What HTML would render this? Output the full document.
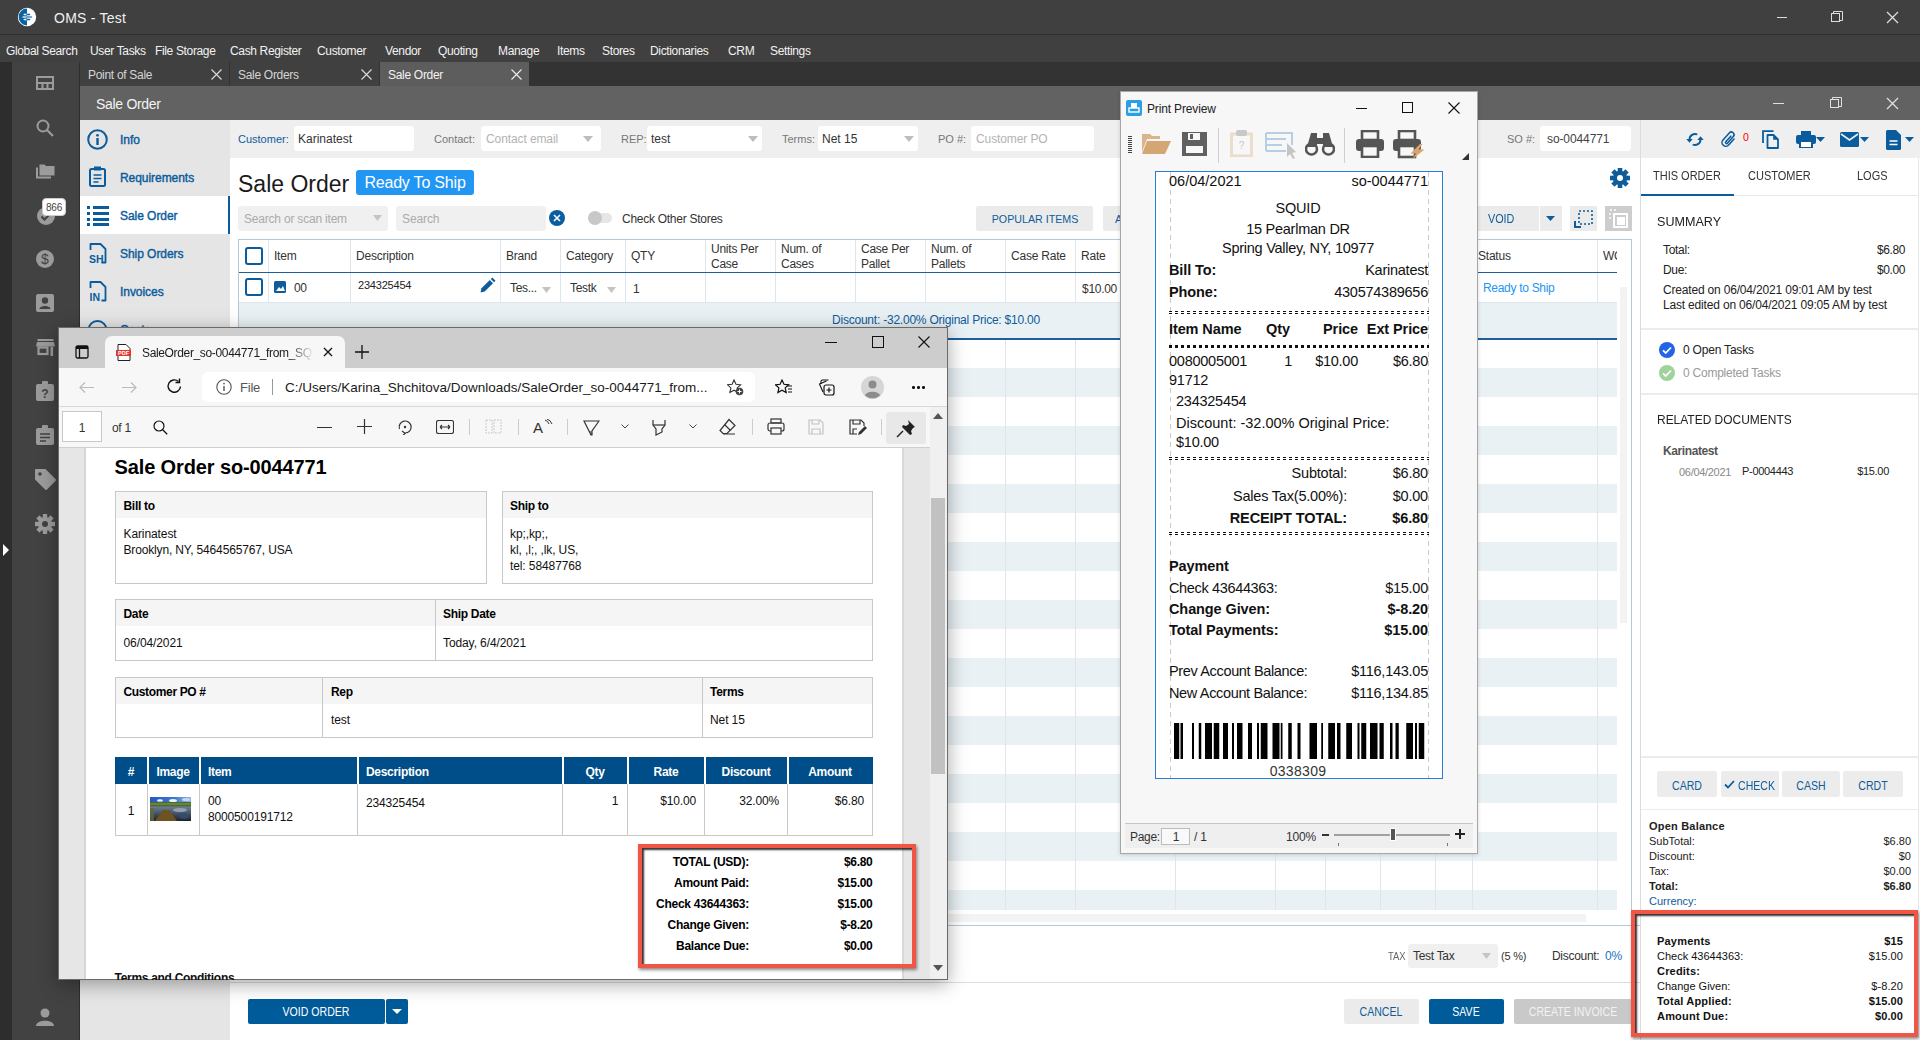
<!DOCTYPE html><html><head><meta charset="utf-8"><style>*{margin:0;padding:0}
html,body{width:1920px;height:1040px;overflow:hidden;background:#fff;position:relative;font-family:"Liberation Sans",sans-serif}
.t{position:absolute;white-space:nowrap;line-height:1}
.r{position:absolute}
</style></head><body><div class="r" style="left:0px;top:0px;width:1920px;height:34px;background:#404040;"></div><div class="r" style="left:0px;top:34px;width:1920px;height:1px;background:#2f2f2f;"></div><div class="r" style="left:0px;top:35px;width:1920px;height:27px;background:#404040;"></div><svg class="r" style="left:17px;top:7px;" width="20" height="20" viewBox="0 0 20 20"><circle cx="10" cy="10" r="9.2" fill="#fff"/><path d="M10 1.6A8.4 8.4 0 0 0 10 18.4Z" fill="#0a62a3"/><path d="M7.2 7.5H10M7.2 12.5H10" stroke="#fff" stroke-width="1.3" stroke-linecap="round"/><path d="M10 7.5h2.6M10 12.5h2.6" stroke="#0a62a3" stroke-width="1.3" stroke-linecap="round"/><path d="M6.2 10H10" stroke="#d4e3ef" stroke-width="1.7" stroke-linecap="round"/><path d="M10 10h4.4" stroke="#4b8abd" stroke-width="1.7" stroke-linecap="round"/></svg><div class="t" style="top:11.15px;font-size:14px;color:#f0f0f0;letter-spacing:0.25px;left:54px;">OMS - Test</div><div class="r" style="left:1777px;top:17px;width:10px;height:1px;background:#ddd;"></div><svg class="r" style="left:1831px;top:11px;" width="12" height="12" viewBox="0 0 12 12"><rect x="0.5" y="2.5" width="8" height="8" fill="none" stroke="#ddd"/><path d="M2.5 2.5V0.5h9v9h-3" fill="none" stroke="#ddd"/></svg><svg class="r" style="left:1886px;top:11px;" width="13" height="13" viewBox="0 0 13 13"><path d="M1 1L12 12M12 1L1 12" stroke="#ddd" stroke-width="1.3"/></svg><div class="t" style="top:44.84px;font-size:12px;color:#f2f2f2;letter-spacing:-0.35px;left:6px;">Global Search</div><div class="t" style="top:44.84px;font-size:12px;color:#f2f2f2;letter-spacing:-0.35px;left:90px;">User Tasks</div><div class="t" style="top:44.84px;font-size:12px;color:#f2f2f2;letter-spacing:-0.35px;left:155px;">File Storage</div><div class="t" style="top:44.84px;font-size:12px;color:#f2f2f2;letter-spacing:-0.35px;left:230px;">Cash Register</div><div class="t" style="top:44.84px;font-size:12px;color:#f2f2f2;letter-spacing:-0.35px;left:317px;">Customer</div><div class="t" style="top:44.84px;font-size:12px;color:#f2f2f2;letter-spacing:-0.35px;left:385px;">Vendor</div><div class="t" style="top:44.84px;font-size:12px;color:#f2f2f2;letter-spacing:-0.35px;left:438px;">Quoting</div><div class="t" style="top:44.84px;font-size:12px;color:#f2f2f2;letter-spacing:-0.35px;left:498px;">Manage</div><div class="t" style="top:44.84px;font-size:12px;color:#f2f2f2;letter-spacing:-0.35px;left:557px;">Items</div><div class="t" style="top:44.84px;font-size:12px;color:#f2f2f2;letter-spacing:-0.35px;left:602px;">Stores</div><div class="t" style="top:44.84px;font-size:12px;color:#f2f2f2;letter-spacing:-0.35px;left:650px;">Dictionaries</div><div class="t" style="top:44.84px;font-size:12px;color:#f2f2f2;letter-spacing:-0.35px;left:728px;">CRM</div><div class="t" style="top:44.84px;font-size:12px;color:#f2f2f2;letter-spacing:-0.35px;left:770px;">Settings</div><div class="r" style="left:0px;top:62px;width:12px;height:978px;background:#2d2d2d;"></div><div class="r" style="left:12px;top:62px;width:67px;height:978px;background:#424242;"></div><div class="r" style="left:79px;top:62px;width:1px;height:978px;background:#2e2e2e;"></div><svg class="r" style="left:36px;top:76px;" width="18" height="14" viewBox="0 0 18 14"><rect x="1" y="1" width="16" height="12" fill="none" stroke="#9b9b9b" stroke-width="2"/><path d="M1 7h16M6.5 7v6M11.5 7v6" stroke="#9b9b9b" stroke-width="2"/></svg><svg class="r" style="left:36px;top:119px;" width="18" height="18" viewBox="0 0 18 18"><circle cx="7" cy="7" r="5.5" fill="none" stroke="#9b9b9b" stroke-width="2"/><path d="M11 11l6 6" stroke="#9b9b9b" stroke-width="2.2"/></svg><svg class="r" style="left:36px;top:164px;" width="19" height="15" viewBox="0 0 19 15"><path d="M3.5 0.5h5l1.5 1.5h8.5v9.5h-15z" fill="#9b9b9b"/><path d="M1 3.5v10h14" fill="none" stroke="#9b9b9b" stroke-width="2"/></svg><svg class="r" style="left:37px;top:207px;" width="18" height="18" viewBox="0 0 18 18"><circle cx="9" cy="9" r="9" fill="#9b9b9b"/><path d="M4.5 9.5l3 3 6-6" fill="none" stroke="#424242" stroke-width="2"/></svg><div class="r" style="left:42px;top:198px;width:24px;height:18px;background:#fff;border-radius:4px;border:1px solid #ccc;box-sizing:border-box;"></div><div class="t" style="top:202.53px;font-size:10px;color:#444;letter-spacing:-0.20px;left:54px;transform:translateX(-50%);">866</div><svg class="r" style="left:36px;top:250px;" width="18" height="18" viewBox="0 0 18 18"><circle cx="9" cy="9" r="9" fill="#9b9b9b"/><text x="9" y="14" font-family="Liberation Sans" font-size="14" text-anchor="middle" fill="#424242">$</text></svg><svg class="r" style="left:36px;top:294px;" width="18" height="18" viewBox="0 0 18 18"><rect x="0" y="0" width="18" height="18" rx="2" fill="#9b9b9b"/><circle cx="9" cy="6.5" r="3.2" fill="#424242"/><path d="M3.5 15c0-4 11-4 11 0z" fill="#424242"/></svg><svg class="r" style="left:36px;top:339px;" width="19" height="17" viewBox="0 0 19 17"><rect x="1.5" y="0" width="16" height="2" fill="#9b9b9b"/><path d="M1 3h17l1 4.5H0z" fill="#9b9b9b"/><rect x="2.5" y="8.5" width="9" height="6.5" fill="none" stroke="#9b9b9b" stroke-width="2.2"/><rect x="14.5" y="8" width="2.6" height="9" fill="#9b9b9b"/></svg><svg class="r" style="left:36px;top:381px;" width="18" height="20" viewBox="0 0 18 20"><rect x="0" y="3" width="18" height="17" rx="2" fill="#9b9b9b"/><rect x="6" y="0" width="6" height="5" rx="1" fill="#9b9b9b"/><text x="9" y="17" font-family="Liberation Sans" font-weight="bold" font-size="12" text-anchor="middle" fill="#424242">?</text></svg><svg class="r" style="left:36px;top:425px;" width="18" height="20" viewBox="0 0 18 20"><rect x="0" y="3" width="18" height="17" rx="2" fill="#9b9b9b"/><rect x="6" y="0" width="6" height="5" rx="1" fill="#9b9b9b"/><path d="M4 9h10M4 12.5h10M4 16h6" stroke="#424242" stroke-width="1.6"/></svg><svg class="r" style="left:35px;top:469px;" width="21" height="21" viewBox="0 0 21 21"><path d="M1 1h9l10 10-9 9L1 10z" fill="#9b9b9b" stroke="#9b9b9b" stroke-linejoin="round" stroke-width="2"/><circle cx="5" cy="5" r="1.8" fill="#424242"/></svg><svg class="r" style="left:35px;top:514px;" width="20" height="20" viewBox="0 0 20 20"><g fill="#9b9b9b" transform="translate(10 10)"><circle r="7"/><rect x="-2.2" y="-10" width="4.4" height="5" transform="rotate(0)"/><rect x="-2.2" y="-10" width="4.4" height="5" transform="rotate(45)"/><rect x="-2.2" y="-10" width="4.4" height="5" transform="rotate(90)"/><rect x="-2.2" y="-10" width="4.4" height="5" transform="rotate(135)"/><rect x="-2.2" y="-10" width="4.4" height="5" transform="rotate(180)"/><rect x="-2.2" y="-10" width="4.4" height="5" transform="rotate(225)"/><rect x="-2.2" y="-10" width="4.4" height="5" transform="rotate(270)"/><rect x="-2.2" y="-10" width="4.4" height="5" transform="rotate(315)"/></g><circle cx="10" cy="10" r="3" fill="#424242"/></svg><svg class="r" style="left:3px;top:544px;" width="6" height="12" viewBox="0 0 6 12"><path d="M0 0l6 6-6 6z" fill="#fff"/></svg><svg class="r" style="left:35px;top:1008px;" width="20" height="18" viewBox="0 0 20 18"><circle cx="10" cy="5" r="4.5" fill="#9b9b9b"/><path d="M1 18c0-7 18-7 18 0z" fill="#9b9b9b"/></svg><div class="r" style="left:80px;top:62px;width:1840px;height:24px;background:#333333;"></div><div class="r" style="left:80px;top:62px;width:149px;height:24px;background:#404040;"></div><div class="t" style="top:68.84px;font-size:12px;color:#d5d5d5;letter-spacing:-0.30px;left:88px;">Point of Sale</div><svg class="r" style="left:211px;top:69px;" width="11" height="11" viewBox="0 0 11 11"><path d="M0.5 0.5L10.5 10.5M10.5 0.5L0.5 10.5" stroke="#ddd" stroke-width="1.1"/></svg><div class="r" style="left:230px;top:62px;width:149px;height:24px;background:#404040;"></div><div class="t" style="top:68.84px;font-size:12px;color:#d5d5d5;letter-spacing:-0.30px;left:238px;">Sale Orders</div><svg class="r" style="left:361px;top:69px;" width="11" height="11" viewBox="0 0 11 11"><path d="M0.5 0.5L10.5 10.5M10.5 0.5L0.5 10.5" stroke="#ddd" stroke-width="1.1"/></svg><div class="r" style="left:380px;top:62px;width:149px;height:24px;background:#5d5d5d;"></div><div class="t" style="top:68.84px;font-size:12px;color:#f2f2f2;letter-spacing:-0.30px;left:388px;">Sale Order</div><svg class="r" style="left:511px;top:69px;" width="11" height="11" viewBox="0 0 11 11"><path d="M0.5 0.5L10.5 10.5M10.5 0.5L0.5 10.5" stroke="#eee" stroke-width="1.1"/></svg><div class="r" style="left:80px;top:86px;width:1840px;height:34px;background:#626262;"></div><div class="t" style="top:97.15px;font-size:14px;color:#f4f4f4;letter-spacing:-0.30px;left:96px;">Sale Order</div><div class="r" style="left:1773px;top:103px;width:11px;height:1px;background:#e0e0e0;"></div><svg class="r" style="left:1830px;top:97px;" width="12" height="12" viewBox="0 0 12 12"><rect x="0.5" y="2.5" width="8" height="8" fill="none" stroke="#e0e0e0"/><path d="M2.5 2.5V0.5h9v9h-3" fill="none" stroke="#e0e0e0"/></svg><svg class="r" style="left:1886px;top:97px;" width="13" height="13" viewBox="0 0 13 13"><path d="M1 1L12 12M12 1L1 12" stroke="#e0e0e0" stroke-width="1.3"/></svg><div class="r" style="left:80px;top:120px;width:150px;height:920px;background:#e5e5e5;"></div><div class="r" style="left:80px;top:196px;width:148px;height:38px;background:#ffffff;"></div><div class="r" style="left:228px;top:196px;width:2px;height:38px;background:#0b5c9c;"></div><svg class="r" style="left:87px;top:129px;" width="21" height="21" viewBox="0 0 21 21"><circle cx="10.5" cy="10.5" r="9.3" fill="none" stroke="#0b5c9c" stroke-width="2"/><rect x="9.3" y="9" width="2.4" height="7" fill="#0b5c9c"/><circle cx="10.5" cy="6.3" r="1.4" fill="#0b5c9c"/></svg><div class="t" style="top:133.84px;font-size:12px;color:#0b5c9c;letter-spacing:-0.05px;left:120px;-webkit-text-stroke:0.4px #0b5c9c;">Info</div><svg class="r" style="left:89px;top:166px;" width="17" height="21" viewBox="0 0 17 21"><rect x="1" y="3" width="15" height="17" rx="1.5" fill="none" stroke="#0b5c9c" stroke-width="2"/><rect x="5" y="0.5" width="7" height="4" fill="#0b5c9c"/><path d="M4.5 9h8M4.5 12.5h8M4.5 16h5" stroke="#0b5c9c" stroke-width="1.6"/></svg><div class="t" style="top:171.84px;font-size:12px;color:#0b5c9c;letter-spacing:-0.05px;left:120px;-webkit-text-stroke:0.4px #0b5c9c;">Requirements</div><svg class="r" style="left:87px;top:205px;" width="22" height="21" viewBox="0 0 22 21"><g fill="#0b5c9c"><rect x="0" y="1" width="3" height="3"/><rect x="6" y="1" width="16" height="3"/><rect x="0" y="7" width="3" height="3"/><rect x="6" y="7" width="16" height="3"/><rect x="0" y="13" width="3" height="3"/><rect x="6" y="13" width="16" height="3"/><rect x="0" y="18" width="3" height="3"/><rect x="6" y="18" width="16" height="3"/></g></svg><div class="t" style="top:209.84px;font-size:12px;color:#0b5c9c;letter-spacing:-0.05px;left:120px;-webkit-text-stroke:0.4px #0b5c9c;">Sale Order</div><svg class="r" style="left:88px;top:243px;" width="20" height="21" viewBox="0 0 20 21"><path d="M2.5 7V1h10l5 5v13.5h-4" fill="none" stroke="#0b5c9c" stroke-width="1.8" stroke-linejoin="round"/><text x="1" y="19.5" font-family="Liberation Sans" font-weight="bold" font-size="10.5" fill="#0b5c9c">SH</text></svg><div class="t" style="top:247.84px;font-size:12px;color:#0b5c9c;letter-spacing:-0.05px;left:120px;-webkit-text-stroke:0.4px #0b5c9c;">Ship Orders</div><svg class="r" style="left:88px;top:281px;" width="20" height="21" viewBox="0 0 20 21"><path d="M2.5 7V1h10l5 5v13.5h-4" fill="none" stroke="#0b5c9c" stroke-width="1.8" stroke-linejoin="round"/><text x="1.5" y="19.5" font-family="Liberation Sans" font-weight="bold" font-size="10.5" fill="#0b5c9c">IN</text></svg><div class="t" style="top:285.84px;font-size:12px;color:#0b5c9c;letter-spacing:-0.05px;left:120px;-webkit-text-stroke:0.4px #0b5c9c;">Invoices</div><svg class="r" style="left:87px;top:319px;" width="21" height="21" viewBox="0 0 21 21"><circle cx="10.5" cy="11" r="9" fill="none" stroke="#0b5c9c" stroke-width="2"/></svg><div class="t" style="top:323.84px;font-size:12px;color:#0b5c9c;letter-spacing:-0.05px;left:120px;-webkit-text-stroke:0.4px #0b5c9c;">Costs</div><div class="r" style="left:230px;top:120px;width:1410px;height:920px;background:#ffffff;"></div><div class="r" style="left:230px;top:120px;width:1410px;height:38px;background:#efefef;"></div><div class="t" style="top:133.69px;font-size:11px;color:#0e5c9a;left:238px;">Customer:</div><div class="r" style="left:294px;top:126px;width:120px;height:25px;background:#fff;border-radius:3px;"></div><div class="t" style="top:132.84px;font-size:12px;color:#333;left:298px;">Karinatest</div><div class="t" style="top:133.69px;font-size:11px;color:#777;left:434px;">Contact:</div><div class="r" style="left:481px;top:126px;width:120px;height:25px;background:#fff;border-radius:3px;"></div><div class="t" style="top:132.84px;font-size:12px;color:#b3b3b3;letter-spacing:-0.10px;left:486px;">Contact email</div><svg class="r" style="left:583px;top:136px;" width="10" height="6" viewBox="0 0 10 6"><path d="M0 0h10L5.0 6z" fill="#bdbdbd"/></svg><div class="t" style="top:133.69px;font-size:11px;color:#777;left:621px;">REP:</div><div class="r" style="left:647px;top:126px;width:115px;height:25px;background:#fff;border-radius:3px;"></div><div class="t" style="top:132.84px;font-size:12px;color:#333;left:651px;">test</div><svg class="r" style="left:748px;top:136px;" width="10" height="6" viewBox="0 0 10 6"><path d="M0 0h10L5.0 6z" fill="#bdbdbd"/></svg><div class="t" style="top:133.69px;font-size:11px;color:#777;left:782px;">Terms:</div><div class="r" style="left:818px;top:126px;width:100px;height:25px;background:#fff;border-radius:3px;"></div><div class="t" style="top:132.84px;font-size:12px;color:#333;left:822px;">Net 15</div><svg class="r" style="left:904px;top:136px;" width="10" height="6" viewBox="0 0 10 6"><path d="M0 0h10L5.0 6z" fill="#bdbdbd"/></svg><div class="t" style="top:133.69px;font-size:11px;color:#777;left:938px;">PO #:</div><div class="r" style="left:971px;top:126px;width:123px;height:25px;background:#fff;border-radius:3px;"></div><div class="t" style="top:132.84px;font-size:12px;color:#b3b3b3;letter-spacing:-0.10px;left:976px;">Customer PO</div><div class="t" style="top:133.69px;font-size:11px;color:#777;left:1507px;">SO #:</div><div class="r" style="left:1540px;top:126px;width:91px;height:25px;background:#fff;border-radius:3px;"></div><div class="t" style="top:132.84px;font-size:12px;color:#444;letter-spacing:-0.10px;left:1547px;">so-0044771</div><div class="t" style="top:172.53px;font-size:23px;color:#1b1b1b;left:238px;">Sale Order</div><div class="r" style="left:356px;top:170px;width:118px;height:25px;background:#2196f3;border-radius:3px;"></div><div class="t" style="top:175.46px;font-size:16px;color:#fff;letter-spacing:-0.20px;left:415px;transform:translateX(-50%);">Ready To Ship</div><div class="r" style="left:238px;top:206px;width:150px;height:25px;background:#f0f0f0;border-radius:3px;"></div><div class="t" style="top:212.84px;font-size:12px;color:#ababab;letter-spacing:-0.20px;left:244px;">Search or scan item</div><svg class="r" style="left:373px;top:215px;" width="9" height="6" viewBox="0 0 9 6"><path d="M0 0h9L4.5 6z" fill="#c4c4c4"/></svg><div class="r" style="left:396px;top:206px;width:150px;height:25px;background:#f0f0f0;border-radius:3px;"></div><div class="t" style="top:212.84px;font-size:12px;color:#ababab;letter-spacing:-0.10px;left:402px;">Search</div><svg class="r" style="left:549px;top:210px;" width="16" height="16" viewBox="0 0 16 16"><circle cx="8" cy="8" r="8" fill="#0a5ea0"/><path d="M5 5l6 6M11 5l-6 6" stroke="#fff" stroke-width="1.6"/></svg><div class="r" style="left:588px;top:213px;width:24px;height:10px;background:#e6e6e6;border-radius:5px;"></div><div class="r" style="left:588px;top:211px;width:14px;height:14px;background:#c8c8c8;border-radius:7px;"></div><div class="t" style="top:212.84px;font-size:12px;color:#333;letter-spacing:-0.27px;left:622px;">Check Other Stores</div><div class="r" style="left:976px;top:206px;width:117px;height:25px;background:#ebebeb;border-radius:2px;"></div><div class="t" style="top:213.69px;font-size:11px;color:#0e5c9a;left:1034.5px;transform:translateX(-50%) scaleX(0.97);">POPULAR ITEMS</div><div class="r" style="left:1103px;top:206px;width:40px;height:25px;background:#ebebeb;border-radius:2px;"></div><div class="t" style="top:213.69px;font-size:11px;color:#0e5c9a;left:1115px;">A</div><div class="r" style="left:1440px;top:206px;width:99px;height:25px;background:#ebebeb;"></div><div class="t" style="top:212.84px;font-size:12px;color:#0e5c9a;left:1488px;transform:scaleX(0.9);transform-origin:0 0;">VOID</div><div class="r" style="left:1540px;top:206px;width:22px;height:25px;background:#ebebeb;"></div><svg class="r" style="left:1546px;top:216px;" width="9" height="5" viewBox="0 0 9 5"><path d="M0 0h9L4.5 5z" fill="#0e5c9a"/></svg><div class="r" style="left:1570px;top:206px;width:27px;height:25px;background:#ebebeb;"></div><svg class="r" style="left:1574px;top:208px;" width="19" height="21" viewBox="0 0 19 21"><path d="M1 13v6h6" fill="none" stroke="#0e5c9a" stroke-width="2"/><path d="M5 3h13v13H5z" fill="none" stroke="#0e5c9a" stroke-width="1.6" stroke-dasharray="2 2"/></svg><div class="r" style="left:1605px;top:206px;width:27px;height:25px;background:#cdcdcd;"></div><svg class="r" style="left:1608px;top:208px;" width="21" height="21" viewBox="0 0 21 21"><path d="M2 2h2M6 2h2M2 5v2M2 9v2" stroke="#fff" stroke-width="1.4"/><rect x="6" y="6" width="13" height="13" fill="none" stroke="#fff" stroke-width="2"/><rect x="9" y="9" width="8" height="8" fill="#fff"/></svg><svg class="r" style="left:1610px;top:168px;" width="20" height="20" viewBox="0 0 20 20"><g fill="#0e5c9a" transform="translate(10 10)"><circle r="7.2"/><rect x="-2.3" y="-10" width="4.6" height="5" transform="rotate(0)"/><rect x="-2.3" y="-10" width="4.6" height="5" transform="rotate(45)"/><rect x="-2.3" y="-10" width="4.6" height="5" transform="rotate(90)"/><rect x="-2.3" y="-10" width="4.6" height="5" transform="rotate(135)"/><rect x="-2.3" y="-10" width="4.6" height="5" transform="rotate(180)"/><rect x="-2.3" y="-10" width="4.6" height="5" transform="rotate(225)"/><rect x="-2.3" y="-10" width="4.6" height="5" transform="rotate(270)"/><rect x="-2.3" y="-10" width="4.6" height="5" transform="rotate(315)"/></g><circle cx="10" cy="10" r="3" fill="#fff"/></svg><div class="r" style="left:238px;top:239px;width:1394px;height:687px;border:1px solid #b5c7d8;box-sizing:border-box;"></div><div class="r" style="left:239px;top:302px;width:1378px;height:36px;background:#e9f1f5;"></div><div class="r" style="left:239px;top:368px;width:1378px;height:29px;background:#e9f1f5;"></div><div class="r" style="left:239px;top:426px;width:1378px;height:29px;background:#e9f1f5;"></div><div class="r" style="left:239px;top:484px;width:1378px;height:29px;background:#e9f1f5;"></div><div class="r" style="left:239px;top:542px;width:1378px;height:29px;background:#e9f1f5;"></div><div class="r" style="left:239px;top:600px;width:1378px;height:29px;background:#e9f1f5;"></div><div class="r" style="left:239px;top:658px;width:1378px;height:29px;background:#e9f1f5;"></div><div class="r" style="left:239px;top:716px;width:1378px;height:29px;background:#e9f1f5;"></div><div class="r" style="left:239px;top:774px;width:1378px;height:29px;background:#e9f1f5;"></div><div class="r" style="left:239px;top:832px;width:1378px;height:29px;background:#e9f1f5;"></div><div class="r" style="left:239px;top:890px;width:1378px;height:20px;background:#e9f1f5;"></div><div class="r" style="left:268px;top:240px;width:1px;height:62px;background:#dfe5ea;"></div><div class="r" style="left:268px;top:340px;width:1px;height:570px;background:#dfe5ea;"></div><div class="r" style="left:350px;top:240px;width:1px;height:62px;background:#dfe5ea;"></div><div class="r" style="left:350px;top:340px;width:1px;height:570px;background:#dfe5ea;"></div><div class="r" style="left:500px;top:240px;width:1px;height:62px;background:#dfe5ea;"></div><div class="r" style="left:500px;top:340px;width:1px;height:570px;background:#dfe5ea;"></div><div class="r" style="left:560px;top:240px;width:1px;height:62px;background:#dfe5ea;"></div><div class="r" style="left:560px;top:340px;width:1px;height:570px;background:#dfe5ea;"></div><div class="r" style="left:625px;top:240px;width:1px;height:62px;background:#dfe5ea;"></div><div class="r" style="left:625px;top:340px;width:1px;height:570px;background:#dfe5ea;"></div><div class="r" style="left:705px;top:240px;width:1px;height:62px;background:#dfe5ea;"></div><div class="r" style="left:705px;top:340px;width:1px;height:570px;background:#dfe5ea;"></div><div class="r" style="left:775px;top:240px;width:1px;height:62px;background:#dfe5ea;"></div><div class="r" style="left:775px;top:340px;width:1px;height:570px;background:#dfe5ea;"></div><div class="r" style="left:855px;top:240px;width:1px;height:62px;background:#dfe5ea;"></div><div class="r" style="left:855px;top:340px;width:1px;height:570px;background:#dfe5ea;"></div><div class="r" style="left:925px;top:240px;width:1px;height:62px;background:#dfe5ea;"></div><div class="r" style="left:925px;top:340px;width:1px;height:570px;background:#dfe5ea;"></div><div class="r" style="left:1005px;top:240px;width:1px;height:62px;background:#dfe5ea;"></div><div class="r" style="left:1005px;top:340px;width:1px;height:570px;background:#dfe5ea;"></div><div class="r" style="left:1075px;top:240px;width:1px;height:62px;background:#dfe5ea;"></div><div class="r" style="left:1075px;top:340px;width:1px;height:570px;background:#dfe5ea;"></div><div class="r" style="left:1175px;top:240px;width:1px;height:62px;background:#dfe5ea;"></div><div class="r" style="left:1175px;top:340px;width:1px;height:570px;background:#dfe5ea;"></div><div class="r" style="left:1275px;top:240px;width:1px;height:62px;background:#dfe5ea;"></div><div class="r" style="left:1275px;top:340px;width:1px;height:570px;background:#dfe5ea;"></div><div class="r" style="left:1325px;top:240px;width:1px;height:62px;background:#dfe5ea;"></div><div class="r" style="left:1325px;top:340px;width:1px;height:570px;background:#dfe5ea;"></div><div class="r" style="left:1380px;top:240px;width:1px;height:62px;background:#dfe5ea;"></div><div class="r" style="left:1380px;top:340px;width:1px;height:570px;background:#dfe5ea;"></div><div class="r" style="left:1435px;top:240px;width:1px;height:62px;background:#dfe5ea;"></div><div class="r" style="left:1435px;top:340px;width:1px;height:570px;background:#dfe5ea;"></div><div class="r" style="left:1472px;top:240px;width:1px;height:62px;background:#dfe5ea;"></div><div class="r" style="left:1472px;top:340px;width:1px;height:570px;background:#dfe5ea;"></div><div class="r" style="left:1597px;top:240px;width:1px;height:62px;background:#dfe5ea;"></div><div class="r" style="left:1597px;top:340px;width:1px;height:570px;background:#dfe5ea;"></div><div class="r" style="left:239px;top:271.5px;width:1378px;height:1.5px;background:#1c5f9b;"></div><div class="r" style="left:239px;top:302px;width:1378px;height:1px;background:#dfe5ea;"></div><div class="r" style="left:239px;top:338px;width:1378px;height:1.5px;background:#1c5f9b;"></div><div class="r" style="left:1620px;top:287px;width:7px;height:336px;background:#f3f3f3;"></div><div class="r" style="left:239px;top:914px;width:1347px;height:8px;background:#f3f3f3;"></div><div class="t" style="top:249.84px;font-size:12px;color:#333;letter-spacing:-0.22px;left:274px;">Item</div><div class="t" style="top:249.84px;font-size:12px;color:#333;letter-spacing:-0.22px;left:356px;">Description</div><div class="t" style="top:249.84px;font-size:12px;color:#333;letter-spacing:-0.22px;left:506px;">Brand</div><div class="t" style="top:249.84px;font-size:12px;color:#333;letter-spacing:-0.22px;left:566px;">Category</div><div class="t" style="top:249.84px;font-size:12px;color:#333;letter-spacing:-0.22px;left:631px;">QTY</div><div class="t" style="top:249.84px;font-size:12px;color:#333;letter-spacing:-0.22px;left:1011px;">Case Rate</div><div class="t" style="top:249.84px;font-size:12px;color:#333;letter-spacing:-0.22px;left:1081px;">Rate</div><div class="t" style="top:249.84px;font-size:12px;color:#333;letter-spacing:-0.22px;left:1478px;">Status</div><div class="t" style="top:242.84px;font-size:12px;color:#333;letter-spacing:-0.24px;left:711px;">Units Per</div><div class="t" style="top:257.84px;font-size:12px;color:#333;letter-spacing:-0.24px;left:711px;">Case</div><div class="t" style="top:242.84px;font-size:12px;color:#333;letter-spacing:-0.24px;left:781px;">Num. of</div><div class="t" style="top:257.84px;font-size:12px;color:#333;letter-spacing:-0.24px;left:781px;">Cases</div><div class="t" style="top:242.84px;font-size:12px;color:#333;letter-spacing:-0.24px;left:861px;">Case Per</div><div class="t" style="top:257.84px;font-size:12px;color:#333;letter-spacing:-0.24px;left:861px;">Pallet</div><div class="t" style="top:242.84px;font-size:12px;color:#333;letter-spacing:-0.24px;left:931px;">Num. of</div><div class="t" style="top:257.84px;font-size:12px;color:#333;letter-spacing:-0.24px;left:931px;">Pallets</div><div class="t" style="top:249.84px;font-size:12px;color:#333;letter-spacing:-0.30px;left:1603px;width:14px;overflow:hidden;padding-bottom:3px;">WO</div><div class="r" style="left:245px;top:247px;width:18px;height:18px;border:2px solid #0b5c9c;border-radius:3px;box-sizing:border-box;"></div><div class="r" style="left:245px;top:278px;width:18px;height:18px;border:2px solid #0b5c9c;border-radius:3px;box-sizing:border-box;"></div><svg class="r" style="left:274px;top:281px;" width="12" height="12" viewBox="0 0 12 12"><rect width="12" height="12" rx="1.5" fill="#0e5c9a"/><path d="M2 10l3-4 2 2 2-3 2 5z" fill="#fff"/></svg><div class="t" style="top:281.84px;font-size:12px;color:#333;letter-spacing:-0.30px;left:294px;">00</div><div class="t" style="top:279.69px;font-size:11px;color:#222;letter-spacing:-0.20px;left:358px;">234325454</div><svg class="r" style="left:480px;top:277px;" width="16" height="16" viewBox="0 0 16 16"><path d="M0.5 15.5l1-4.2 8.3-8.3 3.2 3.2-8.3 8.3z" fill="#0e5c9a"/><path d="M10.8 2l1.5-1.5 3.2 3.2-1.5 1.5z" fill="#0e5c9a"/></svg><div class="t" style="top:281.84px;font-size:12px;color:#333;letter-spacing:-0.30px;left:510px;">Tes...</div><svg class="r" style="left:542px;top:287px;" width="9" height="6" viewBox="0 0 9 6"><path d="M0 0h9L4.5 6z" fill="#c4c4c4"/></svg><div class="t" style="top:281.84px;font-size:12px;color:#333;letter-spacing:-0.30px;left:570px;">Testk</div><svg class="r" style="left:607px;top:287px;" width="9" height="6" viewBox="0 0 9 6"><path d="M0 0h9L4.5 6z" fill="#c4c4c4"/></svg><div class="t" style="top:282.84px;font-size:12px;color:#333;letter-spacing:-0.36px;left:633px;">1</div><div class="t" style="top:282.84px;font-size:12px;color:#333;letter-spacing:-0.30px;right:803px;">$10.00</div><div class="t" style="top:281.84px;font-size:12px;color:#2196f3;letter-spacing:-0.30px;left:1483px;">Ready to Ship</div><div class="t" style="top:313.84px;font-size:12px;color:#0e5c9a;letter-spacing:-0.22px;left:832px;">Discount: -32.00% Original Price: $10.00</div><div class="r" style="left:230px;top:925px;width:1410px;height:1px;background:#b5c7d8;"></div><div class="t" style="top:951.11px;font-size:10.5px;color:#666;left:1388px;transform:scaleX(0.9);transform-origin:0 0;">TAX</div><div class="r" style="left:1408px;top:944px;width:90px;height:24px;background:#f0f0f0;border-radius:3px;"></div><div class="t" style="top:949.84px;font-size:12px;color:#333;letter-spacing:-0.30px;left:1413px;">Test Tax</div><svg class="r" style="left:1482px;top:953px;" width="9" height="6" viewBox="0 0 9 6"><path d="M0 0h9L4.5 6z" fill="#c4c4c4"/></svg><div class="t" style="top:950.69px;font-size:11px;color:#333;letter-spacing:-0.20px;left:1501px;">(5 %)</div><div class="t" style="top:949.84px;font-size:12px;color:#333;letter-spacing:-0.30px;left:1552px;">Discount:</div><div class="t" style="top:949.84px;font-size:12px;color:#1a73c0;letter-spacing:-0.20px;left:1605px;">0%</div><div class="r" style="left:230px;top:982px;width:1410px;height:1px;background:#dedede;"></div><div class="r" style="left:248px;top:999px;width:137px;height:25px;background:#005b9a;border-radius:2px;"></div><div class="t" style="top:1005.84px;font-size:12px;color:#fff;left:316px;transform:translateX(-50%) scaleX(0.88);">VOID ORDER</div><div class="r" style="left:386px;top:999px;width:22px;height:25px;background:#005b9a;border-radius:2px;"></div><svg class="r" style="left:392px;top:1009px;" width="10" height="5" viewBox="0 0 10 5"><path d="M0 0h10L5.0 5z" fill="#fff"/></svg><div class="r" style="left:1344px;top:999px;width:75px;height:25px;background:#ebebeb;border-radius:2px;"></div><div class="t" style="top:1005.84px;font-size:12px;color:#0e5c9a;left:1381px;transform:translateX(-50%) scaleX(0.88);">CANCEL</div><div class="r" style="left:1429px;top:999px;width:75px;height:25px;background:#005b9a;border-radius:2px;"></div><div class="t" style="top:1005.84px;font-size:12px;color:#fff;left:1466px;transform:translateX(-50%) scaleX(0.88);">SAVE</div><div class="r" style="left:1514px;top:999px;width:118px;height:25px;background:#c9c9c9;border-radius:2px;"></div><div class="t" style="top:1005.84px;font-size:12px;color:#f2f2f2;left:1573px;transform:translateX(-50%) scaleX(0.88);">CREATE INVOICE</div><div class="r" style="left:1640px;top:120px;width:280px;height:920px;background:#ffffff;"></div><div class="r" style="left:1640px;top:120px;width:1px;height:920px;background:#dcdcdc;"></div><div class="r" style="left:1918px;top:158px;width:1px;height:880px;background:#e6e6e6;"></div><div class="r" style="left:1641px;top:120px;width:279px;height:38px;background:#efefef;"></div><svg class="r" style="left:1685px;top:131px;" width="20" height="17" viewBox="0 0 20 17"><path d="M12.3 3.5A5.5 5.5 0 0 0 4.5 8.5" fill="none" stroke="#0b5c9c" stroke-width="1.9"/><path d="M1.3 8h6.4L4.5 11.8z" fill="#0b5c9c"/><path d="M7.7 13.5A5.5 5.5 0 0 0 15.5 8.5" fill="none" stroke="#0b5c9c" stroke-width="1.9"/><path d="M12.3 9h6.4L15.5 5.2z" fill="#0b5c9c"/></svg><svg class="r" style="left:1718px;top:129px;" width="21" height="21" viewBox="0 0 21 21"><g transform="translate(10.5 10.5) rotate(42) translate(-4.5 -9)"><path d="M8.3 5V13a3.8 3.8 0 0 1-7.6 0V3.6a2.7 2.7 0 0 1 5.4 0V12.5a1.05 1.05 0 0 1-2.1 0V5" fill="none" stroke="#0b5c9c" stroke-width="1.55" stroke-linecap="round"/></g></svg><div class="t" style="top:132.11px;font-size:10.5px;color:#ff0000;letter-spacing:-0.32px;left:1743px;">0</div><svg class="r" style="left:1762px;top:130px;" width="18" height="19" viewBox="0 0 18 19"><path d="M1 13V1.2h10.5" fill="none" stroke="#0b5c9c" stroke-width="1.8"/><path d="M5.5 5h6l4.5 4.5v8.5H5.5z" fill="none" stroke="#0b5c9c" stroke-width="1.8" stroke-linejoin="round"/><path d="M11.2 5v4.8H16z" fill="#0b5c9c"/></svg><svg class="r" style="left:1796px;top:131px;" width="20" height="17" viewBox="0 0 20 17"><rect x="5" y="0" width="10" height="4" fill="#0b5c9c"/><rect x="0" y="4" width="20" height="9" rx="2" fill="#0b5c9c"/><rect x="4" y="10" width="12" height="7" fill="#fff" stroke="#0b5c9c" stroke-width="2"/></svg><svg class="r" style="left:1816px;top:137px;" width="9" height="5" viewBox="0 0 9 5"><path d="M0 0h9L4.5 5z" fill="#0b5c9c"/></svg><svg class="r" style="left:1840px;top:132px;" width="19" height="15" viewBox="0 0 19 15"><rect width="19" height="15" rx="1.5" fill="#0b5c9c"/><path d="M1 2l8.5 6L18 2" fill="none" stroke="#efefef" stroke-width="1.6"/></svg><svg class="r" style="left:1860px;top:137px;" width="9" height="5" viewBox="0 0 9 5"><path d="M0 0h9L4.5 5z" fill="#0b5c9c"/></svg><svg class="r" style="left:1886px;top:130px;" width="15" height="20" viewBox="0 0 15 20"><path d="M0 1.5A1.5 1.5 0 0 1 1.5 0H10l5 5v13.5A1.5 1.5 0 0 1 13.5 20h-12A1.5 1.5 0 0 1 0 18.5z" fill="#0b5c9c"/><path d="M3.5 11h8M3.5 14.5h8" stroke="#fff" stroke-width="1.6"/></svg><svg class="r" style="left:1905px;top:137px;" width="9" height="5" viewBox="0 0 9 5"><path d="M0 0h9L4.5 5z" fill="#0b5c9c"/></svg><div class="t" style="top:170.42px;font-size:12.5px;color:#333;left:1653px;transform:scaleX(0.88);transform-origin:0 0;">THIS ORDER</div><div class="t" style="top:170.42px;font-size:12.5px;color:#333;left:1748px;transform:scaleX(0.88);transform-origin:0 0;">CUSTOMER</div><div class="t" style="top:170.42px;font-size:12.5px;color:#333;left:1857px;transform:scaleX(0.88);transform-origin:0 0;">LOGS</div><div class="r" style="left:1641px;top:195px;width:277px;height:1px;background:#e8e8e8;"></div><div class="r" style="left:1641px;top:194px;width:93px;height:2px;background:#0b5c9c;"></div><div class="t" style="top:215.00px;font-size:13px;color:#222;left:1657px;transform:scaleX(0.967);transform-origin:0 0;">SUMMARY</div><div class="t" style="top:243.84px;font-size:12px;color:#222;letter-spacing:-0.30px;left:1663px;">Total:</div><div class="t" style="top:243.84px;font-size:12px;color:#222;letter-spacing:-0.40px;right:15px;">$6.80</div><div class="t" style="top:263.84px;font-size:12px;color:#222;letter-spacing:-0.30px;left:1663px;">Due:</div><div class="t" style="top:263.84px;font-size:12px;color:#222;letter-spacing:-0.40px;right:15px;">$0.00</div><div class="t" style="top:283.84px;font-size:12px;color:#222;letter-spacing:-0.18px;left:1663px;">Created on 06/04/2021 09:01 AM by test</div><div class="t" style="top:298.84px;font-size:12px;color:#222;letter-spacing:-0.18px;left:1663px;">Last edited on 06/04/2021 09:05 AM by test</div><div class="r" style="left:1641px;top:328px;width:277px;height:2px;background:#ececec;"></div><svg class="r" style="left:1659px;top:342px;" width="16" height="16" viewBox="0 0 16 16"><circle cx="8" cy="8" r="8" fill="#2463e6"/><path d="M4 8.3l2.7 2.7L12 5.5" fill="none" stroke="#fff" stroke-width="1.8"/></svg><div class="t" style="top:343.84px;font-size:12px;color:#222;letter-spacing:-0.20px;left:1683px;">0 Open Tasks</div><svg class="r" style="left:1659px;top:365px;" width="16" height="16" viewBox="0 0 16 16"><circle cx="8" cy="8" r="8" fill="#9fd39b"/><path d="M4 8.3l2.7 2.7L12 5.5" fill="none" stroke="#fff" stroke-width="1.8"/></svg><div class="t" style="top:366.84px;font-size:12px;color:#999;letter-spacing:-0.24px;left:1683px;">0 Completed Tasks</div><div class="r" style="left:1641px;top:393px;width:277px;height:2px;background:#ececec;"></div><div class="t" style="top:413.00px;font-size:13px;color:#222;left:1657px;transform:scaleX(0.92);transform-origin:0 0;">RELATED DOCUMENTS</div><div class="t" style="top:444.84px;font-size:12px;color:#555;font-weight:700;letter-spacing:-0.40px;left:1663px;">Karinatest</div><div class="t" style="top:466.69px;font-size:11px;color:#888;letter-spacing:-0.30px;left:1679px;">06/04/2021</div><div class="t" style="top:465.69px;font-size:11px;color:#222;letter-spacing:-0.30px;left:1742px;">P-0004443</div><div class="t" style="top:465.69px;font-size:11px;color:#222;letter-spacing:-0.30px;right:31px;">$15.00</div><div class="r" style="left:1641px;top:756px;width:277px;height:2px;background:#ececec;"></div><div class="r" style="left:1657px;top:771px;width:60px;height:26px;background:#ececec;border-radius:2px;"></div><div class="t" style="top:779.84px;font-size:12px;color:#0e5c9a;left:1687.0px;transform:translateX(-50%) scaleX(0.88);">CARD</div><div class="r" style="left:1721px;top:771px;width:58px;height:26px;background:#ececec;border-radius:2px;"></div><svg class="r" style="left:1724px;top:780px;" width="11" height="9" viewBox="0 0 11 9"><path d="M1 4.5l3 3L10 1" fill="none" stroke="#0b5c9c" stroke-width="1.8"/></svg><div class="t" style="top:779.84px;font-size:12px;color:#0e5c9a;left:1738px;transform:scaleX(0.88);transform-origin:0 0;">CHECK</div><div class="r" style="left:1782px;top:771px;width:58px;height:26px;background:#ececec;border-radius:2px;"></div><div class="t" style="top:779.84px;font-size:12px;color:#0e5c9a;left:1811.0px;transform:translateX(-50%) scaleX(0.88);">CASH</div><div class="r" style="left:1843px;top:771px;width:60px;height:26px;background:#ececec;border-radius:2px;"></div><div class="t" style="top:779.84px;font-size:12px;color:#0e5c9a;left:1873.0px;transform:translateX(-50%) scaleX(0.88);">CRDT</div><div class="r" style="left:1641px;top:809px;width:277px;height:1px;background:#ececec;"></div><div class="t" style="top:820.69px;font-size:11px;color:#222;font-weight:700;letter-spacing:0.20px;left:1649px;">Open Balance</div><div class="t" style="top:835.69px;font-size:11px;color:#222;left:1649px;">SubTotal:</div><div class="t" style="top:835.69px;font-size:11px;color:#222;right:9px;">$6.80</div><div class="t" style="top:850.69px;font-size:11px;color:#222;left:1649px;">Discount:</div><div class="t" style="top:850.69px;font-size:11px;color:#222;right:9px;">$0</div><div class="t" style="top:865.69px;font-size:11px;color:#222;left:1649px;">Tax:</div><div class="t" style="top:865.69px;font-size:11px;color:#222;right:9px;">$0.00</div><div class="t" style="top:880.69px;font-size:11px;color:#222;font-weight:700;left:1649px;">Total:</div><div class="t" style="top:880.69px;font-size:11px;color:#222;font-weight:700;right:9px;">$6.80</div><div class="t" style="top:895.69px;font-size:11px;color:#0e5c9a;left:1649px;">Currency:</div><div class="r" style="left:1631px;top:910px;width:287px;height:127px;border:4px solid #f05545;box-sizing:border-box;box-shadow:1px 2px 3px rgba(0,0,0,0.45);"></div><div class="r" style="left:1635px;top:914px;width:279px;height:119px;box-shadow:inset 2px 2px 2px rgba(0,0,0,0.8);"></div><div class="t" style="top:935.69px;font-size:11px;color:#111;font-weight:700;letter-spacing:0.20px;left:1657px;">Payments</div><div class="t" style="top:935.69px;font-size:11px;color:#111;font-weight:700;letter-spacing:0.10px;right:17px;">$15</div><div class="t" style="top:950.69px;font-size:11px;color:#111;left:1657px;">Check 43644363:</div><div class="t" style="top:950.69px;font-size:11px;color:#111;letter-spacing:0.10px;right:17px;">$15.00</div><div class="t" style="top:965.69px;font-size:11px;color:#111;font-weight:700;letter-spacing:0.20px;left:1657px;">Credits:</div><div class="t" style="top:980.69px;font-size:11px;color:#111;left:1657px;">Change Given:</div><div class="t" style="top:980.69px;font-size:11px;color:#111;letter-spacing:0.10px;right:17px;">$-8.20</div><div class="t" style="top:995.69px;font-size:11px;color:#111;font-weight:700;letter-spacing:0.20px;left:1657px;">Total Applied:</div><div class="t" style="top:995.69px;font-size:11px;color:#111;font-weight:700;letter-spacing:0.10px;right:17px;">$15.00</div><div class="t" style="top:1010.69px;font-size:11px;color:#111;font-weight:700;letter-spacing:0.20px;left:1657px;">Amount Due:</div><div class="t" style="top:1010.69px;font-size:11px;color:#111;font-weight:700;letter-spacing:0.10px;right:17px;">$0.00</div><div class="r" style="left:58px;top:327px;width:890px;height:653px;box-shadow:0 4px 18px rgba(0,0,0,0.35);"></div><div class="r" style="left:0;top:0;width:1920px;height:1040px;clip-path:inset(327px 972px 60px 58px);"><div class="r" style="left:58px;top:327px;width:890px;height:653px;background:#f7f7f7;border:1px solid #6a6a6a;box-sizing:border-box;"></div><div class="r" style="left:59px;top:328px;width:888px;height:40px;background:#cdcdcd;"></div><svg class="r" style="left:75px;top:345px;" width="14" height="14" viewBox="0 0 14 14"><rect x="1" y="1" width="12" height="12" rx="1.5" fill="none" stroke="#111" stroke-width="1.3"/><rect x="1" y="1" width="12" height="3" fill="#111"/><path d="M4.5 4v9" stroke="#111" stroke-width="1.3"/></svg><div class="r" style="left:105px;top:336px;width:240px;height:36px;background:#f7f7f7;border-radius:7px 7px 0 0;"></div><svg class="r" style="left:116px;top:344px;" width="15" height="17" viewBox="0 0 15 17"><path d="M2 0.5h8l4 4v12H2z" fill="#fff" stroke="#222" stroke-width="1"/><rect x="0" y="6" width="15" height="6" fill="#e3342f"/><text x="7.5" y="11" font-family="Liberation Sans" font-weight="bold" font-size="5.5" fill="#fff" text-anchor="middle">PDF</text></svg><div class="t" style="top:346.84px;font-size:12px;color:#1a1a1a;letter-spacing:-0.35px;left:142px;width:172px;overflow:hidden;white-space:nowrap;padding-bottom:4px;-webkit-mask-image:linear-gradient(90deg,#000 85%,transparent);">SaleOrder_so-0044771_from_SQ</div><svg class="r" style="left:323px;top:347px;" width="10" height="10" viewBox="0 0 10 10"><path d="M1 1l8 8M9 1l-8 8" stroke="#111" stroke-width="1.3"/></svg><svg class="r" style="left:355px;top:345px;" width="14" height="14" viewBox="0 0 14 14"><path d="M7 0v14M0 7h14" stroke="#111" stroke-width="1.3"/></svg><div class="r" style="left:825px;top:342px;width:12px;height:1px;background:#111;"></div><div class="r" style="left:872px;top:336px;width:12px;height:12px;border:1px solid #111;box-sizing:border-box;"></div><svg class="r" style="left:918px;top:336px;" width="12" height="12" viewBox="0 0 12 12"><path d="M0.5 0.5l11 11M11.5 0.5l-11 11" stroke="#111" stroke-width="1.1"/></svg><svg class="r" style="left:79px;top:382px;" width="15" height="11" viewBox="0 0 15 11"><path d="M6 0.5L1 5.5l5 5M1 5.5h14" fill="none" stroke="#bbb" stroke-width="1.2"/></svg><svg class="r" style="left:122px;top:382px;" width="15" height="11" viewBox="0 0 15 11"><path d="M9 0.5l5 5-5 5M14 5.5H0" fill="none" stroke="#bbb" stroke-width="1.2"/></svg><svg class="r" style="left:166px;top:378px;" width="17" height="17" viewBox="0 0 17 17"><path d="M14.5 8.5A6.2 6.2 0 1 1 12.5 3.5" fill="none" stroke="#111" stroke-width="1.4"/><path d="M13.5 0.5v4h-4" fill="none" stroke="#111" stroke-width="1.4"/></svg><div class="r" style="left:202px;top:372px;width:553px;height:30px;background:#ffffff;border-radius:6px;"></div><svg class="r" style="left:216px;top:379px;" width="16" height="16" viewBox="0 0 16 16"><circle cx="8" cy="8" r="7.2" fill="none" stroke="#555" stroke-width="1.1"/><path d="M8 7v5" stroke="#555" stroke-width="1.4"/><circle cx="8" cy="4.6" r="0.9" fill="#555"/></svg><div class="t" style="top:381.00px;font-size:13px;color:#555;letter-spacing:-0.20px;left:240px;">File</div><div class="r" style="left:272px;top:379px;width:1px;height:16px;background:#999;"></div><div class="t" style="top:380.57px;font-size:13.5px;color:#1a1a1a;left:285px;">C:/Users/Karina_Shchitova/Downloads/SaleOrder_so-0044771_from...</div><svg class="r" style="left:727px;top:379px;" width="17" height="17" viewBox="0 0 17 17"><path d="M7 1l2 4.3 4.6.5-3.4 3.1 1 4.6L7 11.2 2.9 13.5l1-4.6L0.5 5.8l4.6-.5z" fill="none" stroke="#333" stroke-width="1.1"/><circle cx="12.5" cy="12.5" r="3.8" fill="#444"/><path d="M12.5 10.5v4M10.5 12.5h4" stroke="#fff" stroke-width="1"/></svg><svg class="r" style="left:775px;top:379px;" width="17" height="16" viewBox="0 0 17 16"><path d="M7 1l2 4.3 4.6.5-3.4 3.1 1 4.6L7 11.2 2.9 13.5l1-4.6L0.5 5.8l4.6-.5z" fill="none" stroke="#111" stroke-width="1.2"/><path d="M12 7h5M13 10h4M13 13h4" stroke="#111" stroke-width="1.1"/></svg><svg class="r" style="left:818px;top:379px;" width="17" height="17" viewBox="0 0 17 17"><path d="M3 5V2.5A1.5 1.5 0 0 1 4.5 1h6" fill="none" stroke="#111" stroke-width="1.1"/><path d="M1 4l9-2" stroke="#111" stroke-width="0"/><rect x="6" y="6" width="10" height="10" rx="2" fill="none" stroke="#111" stroke-width="1.2"/><path d="M11 8.5v5M8.5 11h5" stroke="#111" stroke-width="1.2"/><path d="M5 13L1.5 5l7-3" fill="none" stroke="#111" stroke-width="1.1"/></svg><svg class="r" style="left:861px;top:376px;" width="23" height="23" viewBox="0 0 23 23"><circle cx="11.5" cy="11.5" r="11.5" fill="#d6d6d6"/><circle cx="11.5" cy="8.5" r="4" fill="#8c8c8c"/><path d="M4 19.5c1.5-5 13.5-5 15 0a11.5 11.5 0 0 1-15 0z" fill="#8c8c8c"/></svg><div class="r" style="left:912px;top:386px;width:2.5px;height:2.5px;background:#111;border-radius:50%;"></div><div class="r" style="left:917px;top:386px;width:2.5px;height:2.5px;background:#111;border-radius:50%;"></div><div class="r" style="left:922px;top:386px;width:2.5px;height:2.5px;background:#111;border-radius:50%;"></div><div class="r" style="left:59px;top:406px;width:888px;height:1px;background:#d8d8d8;"></div><div class="r" style="left:62px;top:411px;width:40px;height:31px;background:#fff;border:1px solid #c8c8c8;box-sizing:border-box;"></div><div class="t" style="top:421.84px;font-size:12px;color:#333;letter-spacing:-0.36px;left:82px;transform:translateX(-50%);">1</div><div class="t" style="top:421.84px;font-size:12px;color:#333;letter-spacing:-0.30px;left:112px;">of 1</div><svg class="r" style="left:153px;top:420px;" width="15" height="15" viewBox="0 0 15 15"><circle cx="6" cy="6" r="5" fill="none" stroke="#111" stroke-width="1.2"/><path d="M9.7 9.7l4.5 4.5" stroke="#111" stroke-width="1.3"/></svg><div class="r" style="left:317px;top:427px;width:15px;height:1.2px;background:#333;"></div><svg class="r" style="left:357px;top:419px;" width="15" height="15" viewBox="0 0 15 15"><path d="M7.5 0v15M0 7.5h15" stroke="#333" stroke-width="1.2"/></svg><svg class="r" style="left:397px;top:419px;" width="16" height="16" viewBox="0 0 16 16"><path d="M2.5 10A6 6 0 1 1 8 14" fill="none" stroke="#333" stroke-width="1.2"/><path d="M5 12l3 2.3-2 2.2" fill="none" stroke="#333" stroke-width="1.2"/><circle cx="8" cy="8" r="1.2" fill="#333"/></svg><svg class="r" style="left:436px;top:420px;" width="18" height="14" viewBox="0 0 18 14"><rect x="0.5" y="0.5" width="17" height="13" rx="2" fill="none" stroke="#333" stroke-width="1.1"/><path d="M4 7h10M4 7l2-2M4 7l2 2M14 7l-2-2M14 7l-2 2" fill="none" stroke="#333" stroke-width="1.1"/></svg><div class="r" style="left:469px;top:419px;width:1px;height:16px;background:#ccc;"></div><svg class="r" style="left:485px;top:419px;" width="17" height="15" viewBox="0 0 17 15"><path d="M1 1h6v13H1zM9 1h7v13H9z" fill="none" stroke="#c8c8c8" stroke-width="1" stroke-dasharray="2 1"/></svg><div class="r" style="left:518px;top:419px;width:1px;height:16px;background:#ccc;"></div><div class="t" style="top:420.30px;font-size:15px;color:#333;left:533px;">A</div><svg class="r" style="left:544px;top:419px;" width="9" height="9" viewBox="0 0 9 9"><path d="M1 1a6 6 0 0 1 4 4M3 0a8 8 0 0 1 5 5" fill="none" stroke="#333" stroke-width="1"/></svg><div class="r" style="left:567px;top:419px;width:1px;height:16px;background:#ccc;"></div><svg class="r" style="left:583px;top:419px;" width="17" height="17" viewBox="0 0 17 17"><path d="M1 2h15L9 12v4L8 16z" fill="none" stroke="#333" stroke-width="1.2"/><path d="M8 16v-4" stroke="#333"/></svg><svg class="r" style="left:621px;top:424px;" width="8" height="5" viewBox="0 0 8 5"><path d="M0.5 0.5l3.5 3.5 3.5-3.5" fill="none" stroke="#444" stroke-width="1"/></svg><svg class="r" style="left:651px;top:419px;" width="17" height="17" viewBox="0 0 17 17"><path d="M2 1v5l3 4v6l6-3V10l3-4V1" fill="none" stroke="#333" stroke-width="1.2"/><path d="M2 6h12" stroke="#333" stroke-width="1.2"/></svg><svg class="r" style="left:689px;top:424px;" width="8" height="5" viewBox="0 0 8 5"><path d="M0.5 0.5l3.5 3.5 3.5-3.5" fill="none" stroke="#444" stroke-width="1"/></svg><svg class="r" style="left:719px;top:418px;" width="18" height="18" viewBox="0 0 18 18"><path d="M10 1.5l6 6-8 8H4l-3-3z" fill="none" stroke="#333" stroke-width="1.2"/><path d="M5.5 6.5l6 6M4 16h12" stroke="#333" stroke-width="1.2"/></svg><div class="r" style="left:752px;top:419px;width:1px;height:16px;background:#ccc;"></div><svg class="r" style="left:767px;top:418px;" width="18" height="17" viewBox="0 0 18 17"><rect x="4" y="1" width="10" height="4" fill="none" stroke="#333" stroke-width="1.2"/><rect x="1" y="5" width="16" height="8" rx="2" fill="none" stroke="#333" stroke-width="1.2"/><rect x="4" y="10" width="10" height="6" fill="#f7f7f7" stroke="#333" stroke-width="1.2"/></svg><svg class="r" style="left:808px;top:419px;" width="16" height="16" viewBox="0 0 16 16"><path d="M1 1h11l3 3v11H1z" fill="none" stroke="#c4c4c4" stroke-width="1.2"/><path d="M4 1v4h7V1M4 15v-5h8v5" fill="none" stroke="#c4c4c4" stroke-width="1.2"/></svg><svg class="r" style="left:849px;top:419px;" width="18" height="17" viewBox="0 0 18 17"><path d="M8 15H1V1h11l3 3v3" fill="none" stroke="#333" stroke-width="1.2"/><path d="M4 1v4h7V1M4 15v-5h4" fill="none" stroke="#333" stroke-width="1.2"/><path d="M9 16l1-3 6-6 2 2-6 6z" fill="#333"/></svg><div class="r" style="left:881px;top:419px;width:1px;height:16px;background:#ccc;"></div><div class="r" style="left:886px;top:412px;width:40px;height:32px;background:#e8e8e8;border-radius:3px;"></div><svg class="r" style="left:896px;top:419px;" width="20" height="19" viewBox="0 0 20 19"><path d="M12 1l7 7-2 1-2 3 1 3-2 1-8-8 1-2 3 1 3-2z" fill="#222"/><path d="M7 12l-6 6" stroke="#222" stroke-width="1.5"/></svg><div class="r" style="left:59px;top:447px;width:871px;height:1px;background:#cfcfcf;"></div><div class="r" style="left:930px;top:407px;width:17px;height:572px;background:#f0f0f0;"></div><svg class="r" style="left:933px;top:413px;" width="10" height="6" viewBox="0 0 10 6"><path d="M0 6L5 0l5 6z" fill="#555"/></svg><div class="r" style="left:931px;top:498px;width:14px;height:276px;background:#c1c1c1;"></div><svg class="r" style="left:933px;top:965px;" width="10" height="6" viewBox="0 0 10 6"><path d="M0 0h10L5 6z" fill="#555"/></svg><div class="r" style="left:59px;top:448px;width:871px;height:531px;background:#e6e6e6;"></div><div class="r" style="left:86px;top:448px;width:816px;height:531px;background:#ffffff;"></div><div class="r" style="left:84px;top:448px;width:2px;height:531px;background:#d6d6d6;"></div><div class="r" style="left:902px;top:448px;width:2px;height:531px;background:#d8d8d8;"></div><div class="t" style="top:457.07px;font-size:20px;color:#000;font-weight:700;letter-spacing:-0.12px;left:114.5px;">Sale Order so-0044771</div><div class="r" style="left:115px;top:491px;width:372px;height:93px;border:1px solid #c8c8c8;box-sizing:border-box;"></div><div class="r" style="left:116px;top:492px;width:370px;height:26px;background:#f5f5f5;"></div><div class="t" style="top:499.84px;font-size:12px;color:#000;font-weight:700;letter-spacing:-0.30px;left:123.5px;">Bill to</div><div class="t" style="top:527.84px;font-size:12px;color:#111;letter-spacing:-0.10px;left:123.5px;">Karinatest</div><div class="t" style="top:543.84px;font-size:12px;color:#111;letter-spacing:-0.15px;left:123.5px;">Brooklyn, NY, 5464565767, USA</div><div class="r" style="left:502px;top:491px;width:371px;height:93px;border:1px solid #c8c8c8;box-sizing:border-box;"></div><div class="r" style="left:503px;top:492px;width:369px;height:26px;background:#f5f5f5;"></div><div class="t" style="top:499.84px;font-size:12px;color:#000;font-weight:700;letter-spacing:-0.30px;left:510px;">Ship to</div><div class="t" style="top:527.84px;font-size:12px;color:#111;letter-spacing:-0.10px;left:510px;">kp;,kp;,</div><div class="t" style="top:543.84px;font-size:12px;color:#111;letter-spacing:-0.10px;left:510px;">kl, ,l;, ,lk, US,</div><div class="t" style="top:559.84px;font-size:12px;color:#111;letter-spacing:-0.10px;left:510px;">tel: 58487768</div><div class="r" style="left:115px;top:599px;width:758px;height:62px;border:1px solid #c8c8c8;box-sizing:border-box;"></div><div class="r" style="left:116px;top:600px;width:756px;height:26px;background:#f5f5f5;"></div><div class="r" style="left:435px;top:599px;width:1px;height:62px;background:#c8c8c8;"></div><div class="t" style="top:607.84px;font-size:12px;color:#000;font-weight:700;letter-spacing:-0.30px;left:123.5px;">Date</div><div class="t" style="top:607.84px;font-size:12px;color:#000;font-weight:700;letter-spacing:-0.30px;left:443px;">Ship Date</div><div class="t" style="top:636.84px;font-size:12px;color:#111;letter-spacing:-0.10px;left:123.5px;">06/04/2021</div><div class="t" style="top:636.84px;font-size:12px;color:#111;letter-spacing:-0.10px;left:443px;">Today, 6/4/2021</div><div class="r" style="left:115px;top:677px;width:758px;height:61px;border:1px solid #c8c8c8;box-sizing:border-box;"></div><div class="r" style="left:116px;top:678px;width:756px;height:26px;background:#f5f5f5;"></div><div class="r" style="left:322px;top:677px;width:1px;height:61px;background:#c8c8c8;"></div><div class="r" style="left:702px;top:677px;width:1px;height:61px;background:#c8c8c8;"></div><div class="t" style="top:685.84px;font-size:12px;color:#000;font-weight:700;letter-spacing:-0.35px;left:123.5px;">Customer PO #</div><div class="t" style="top:685.84px;font-size:12px;color:#000;font-weight:700;letter-spacing:-0.30px;left:331px;">Rep</div><div class="t" style="top:685.84px;font-size:12px;color:#000;font-weight:700;letter-spacing:-0.30px;left:710px;">Terms</div><div class="t" style="top:713.84px;font-size:12px;color:#111;letter-spacing:-0.10px;left:331px;">test</div><div class="t" style="top:713.84px;font-size:12px;color:#111;letter-spacing:-0.10px;left:710px;">Net 15</div><div class="r" style="left:115px;top:757px;width:758px;height:79px;border:1px solid #c8c8c8;box-sizing:border-box;"></div><div class="r" style="left:115px;top:757px;width:758px;height:27px;background:#004e89;"></div><div class="r" style="left:147px;top:757px;width:1px;height:79px;background:#c8c8c8;"></div><div class="r" style="left:147px;top:757px;width:2px;height:27px;background:#ffffff;"></div><div class="r" style="left:199px;top:757px;width:1px;height:79px;background:#c8c8c8;"></div><div class="r" style="left:199px;top:757px;width:2px;height:27px;background:#ffffff;"></div><div class="r" style="left:357px;top:757px;width:1px;height:79px;background:#c8c8c8;"></div><div class="r" style="left:357px;top:757px;width:2px;height:27px;background:#ffffff;"></div><div class="r" style="left:562px;top:757px;width:1px;height:79px;background:#c8c8c8;"></div><div class="r" style="left:562px;top:757px;width:2px;height:27px;background:#ffffff;"></div><div class="r" style="left:627px;top:757px;width:1px;height:79px;background:#c8c8c8;"></div><div class="r" style="left:627px;top:757px;width:2px;height:27px;background:#ffffff;"></div><div class="r" style="left:704px;top:757px;width:1px;height:79px;background:#c8c8c8;"></div><div class="r" style="left:704px;top:757px;width:2px;height:27px;background:#ffffff;"></div><div class="r" style="left:787px;top:757px;width:1px;height:79px;background:#c8c8c8;"></div><div class="r" style="left:787px;top:757px;width:2px;height:27px;background:#ffffff;"></div><div class="t" style="top:765.84px;font-size:12px;color:#fff;font-weight:700;letter-spacing:-0.30px;left:131px;transform:translateX(-50%);">#</div><div class="t" style="top:765.84px;font-size:12px;color:#fff;font-weight:700;letter-spacing:-0.30px;left:173px;transform:translateX(-50%);">Image</div><div class="t" style="top:765.84px;font-size:12px;color:#fff;font-weight:700;letter-spacing:-0.30px;left:595px;transform:translateX(-50%);">Qty</div><div class="t" style="top:765.84px;font-size:12px;color:#fff;font-weight:700;letter-spacing:-0.30px;left:666px;transform:translateX(-50%);">Rate</div><div class="t" style="top:765.84px;font-size:12px;color:#fff;font-weight:700;letter-spacing:-0.30px;left:746px;transform:translateX(-50%);">Discount</div><div class="t" style="top:765.84px;font-size:12px;color:#fff;font-weight:700;letter-spacing:-0.30px;left:830px;transform:translateX(-50%);">Amount</div><div class="t" style="top:765.84px;font-size:12px;color:#fff;font-weight:700;letter-spacing:-0.30px;left:208px;">Item</div><div class="t" style="top:765.84px;font-size:12px;color:#fff;font-weight:700;letter-spacing:-0.30px;left:366px;">Description</div><div class="t" style="top:804.84px;font-size:12px;color:#111;letter-spacing:-0.36px;left:131px;transform:translateX(-50%);">1</div><svg class="r" style="left:150px;top:797px;" width="41" height="24" viewBox="0 0 41 24"><defs><linearGradient id="wat" x1="0" y1="0" x2="0" y2="1"><stop offset="0" stop-color="#6d8098"/><stop offset="1" stop-color="#1c2128"/></linearGradient><linearGradient id="sk" x1="0" y1="0" x2="1" y2="0"><stop offset="0" stop-color="#2458c8"/><stop offset="0.6" stop-color="#3f78d0"/><stop offset="1" stop-color="#9ab8e0"/></linearGradient></defs><rect width="41" height="6" fill="url(#sk)"/><ellipse cx="10" cy="3.5" rx="3" ry="1.3" fill="#e8eef8"/><ellipse cx="23" cy="3.5" rx="4" ry="1.6" fill="#eef2f8"/><ellipse cx="36" cy="2.5" rx="4" ry="1.5" fill="#c9d8ee"/><rect y="5" width="41" height="5" fill="#4f6a2e"/><rect y="6" width="41" height="2" fill="#66843a"/><rect y="9.5" width="41" height="14.5" fill="url(#wat)"/><ellipse cx="30" cy="13" rx="7" ry="2" fill="#aab8c8" opacity="0.7"/><ellipse cx="34" cy="19" rx="5" ry="3" fill="#304e7a" opacity="0.8"/><path d="M5 24L13 13h6l8 11z" fill="#6e5222"/><path d="M0 11h4v13H0z" fill="#5e6a3c" opacity="0.8"/></svg><div class="t" style="top:794.84px;font-size:12px;color:#111;letter-spacing:-0.10px;left:208px;">00</div><div class="t" style="top:810.84px;font-size:12px;color:#111;letter-spacing:-0.15px;left:208px;">8000500191712</div><div class="t" style="top:796.84px;font-size:12px;color:#111;letter-spacing:-0.15px;left:366px;">234325454</div><div class="t" style="top:794.84px;font-size:12px;color:#111;letter-spacing:-0.36px;right:1302px;">1</div><div class="t" style="top:794.84px;font-size:12px;color:#111;letter-spacing:-0.15px;right:1224px;">$10.00</div><div class="t" style="top:794.84px;font-size:12px;color:#111;letter-spacing:-0.15px;right:1141px;">32.00%</div><div class="t" style="top:794.84px;font-size:12px;color:#111;letter-spacing:-0.15px;right:1056px;">$6.80</div><div class="r" style="left:638px;top:844px;width:278px;height:124px;border:4px solid #f05545;box-sizing:border-box;box-shadow:1px 2px 3px rgba(0,0,0,0.45);"></div><div class="r" style="left:642px;top:848px;width:270px;height:116px;box-shadow:inset 2px 2px 2px rgba(0,0,0,0.8);"></div><div class="t" style="top:855.84px;font-size:12px;color:#000;font-weight:700;letter-spacing:-0.25px;right:1171px;">TOTAL (USD):</div><div class="t" style="top:855.84px;font-size:12px;color:#000;font-weight:700;letter-spacing:-0.30px;right:1047.5px;">$6.80</div><div class="t" style="top:876.84px;font-size:12px;color:#000;font-weight:700;letter-spacing:-0.25px;right:1171px;">Amount Paid:</div><div class="t" style="top:876.84px;font-size:12px;color:#000;font-weight:700;letter-spacing:-0.30px;right:1047.5px;">$15.00</div><div class="t" style="top:897.84px;font-size:12px;color:#000;font-weight:700;letter-spacing:-0.25px;right:1171px;">Check 43644363:</div><div class="t" style="top:897.84px;font-size:12px;color:#000;font-weight:700;letter-spacing:-0.30px;right:1047.5px;">$15.00</div><div class="t" style="top:918.84px;font-size:12px;color:#000;font-weight:700;letter-spacing:-0.25px;right:1171px;">Change Given:</div><div class="t" style="top:918.84px;font-size:12px;color:#000;font-weight:700;letter-spacing:-0.30px;right:1047.5px;">$-8.20</div><div class="t" style="top:939.84px;font-size:12px;color:#000;font-weight:700;letter-spacing:-0.25px;right:1171px;">Balance Due:</div><div class="t" style="top:939.84px;font-size:12px;color:#000;font-weight:700;letter-spacing:-0.30px;right:1047.5px;">$0.00</div><div class="t" style="top:971.84px;font-size:12px;color:#111;font-weight:700;letter-spacing:-0.30px;left:114.5px;">Terms and Conditions</div></div><div class="r" style="left:1120px;top:91px;width:358px;height:763px;background:#f7f7f7;border:1px solid #a6a6a6;box-sizing:border-box;box-shadow:0 1px 4px rgba(0,0,0,0.15);"></div><svg class="r" style="left:1126px;top:100px;" width="16" height="16" viewBox="0 0 16 16"><rect width="16" height="16" rx="2" fill="#2b9fe3"/><rect x="5" y="3" width="6" height="5" fill="#fff"/><rect x="3" y="8" width="10" height="4" fill="none" stroke="#fff" stroke-width="1.4"/></svg><div class="t" style="top:102.84px;font-size:12px;color:#222;letter-spacing:-0.15px;left:1147px;">Print Preview</div><div class="r" style="left:1356px;top:108px;width:11px;height:1px;background:#111;"></div><div class="r" style="left:1402px;top:102px;width:11px;height:11px;border:1px solid #111;box-sizing:border-box;"></div><svg class="r" style="left:1448px;top:102px;" width="12" height="12" viewBox="0 0 12 12"><path d="M0.5 0.5l11 11M11.5 0.5l-11 11" stroke="#111" stroke-width="1.1"/></svg><svg class="r" style="left:1128px;top:136px;" width="4" height="17" viewBox="0 0 4 17"><rect x="0" y="0" width="4" height="1" fill="#444"/><rect x="0" y="2" width="4" height="1" fill="#444"/><rect x="0" y="4" width="4" height="1" fill="#444"/><rect x="0" y="6" width="4" height="1" fill="#444"/><rect x="0" y="8" width="4" height="1" fill="#444"/><rect x="0" y="10" width="4" height="1" fill="#444"/><rect x="0" y="12" width="4" height="1" fill="#444"/><rect x="0" y="14" width="4" height="1" fill="#444"/><rect x="0" y="16" width="4" height="1" fill="#444"/></svg><svg class="r" style="left:1141px;top:132px;" width="31" height="23" viewBox="0 0 31 23"><path d="M1 2h8l2 2h8v3H6L1 20z" fill="#d9b48c"/><path d="M6 9h24l-6 13H1z" fill="#d4a673"/></svg><svg class="r" style="left:1182px;top:132px;" width="25" height="24" viewBox="0 0 25 24"><path d="M0 0h25v24H0z" fill="#606060"/><rect x="6" y="1" width="12" height="7" fill="#f7f7f7"/><rect x="8" y="2" width="3" height="5" fill="#606060"/><rect x="4" y="14" width="17" height="7" fill="#f7f7f7"/></svg><div class="r" style="left:1218px;top:128px;width:1px;height:35px;background:#d0d0d0;"></div><svg class="r" style="left:1230px;top:130px;" width="23" height="27" viewBox="0 0 23 27"><rect x="1.5" y="4" width="20" height="22" fill="none" stroke="#ecdcca" stroke-width="3"/><rect x="6" y="0" width="11" height="6" rx="2" fill="#c8c8c8"/><text x="11.5" y="19" font-family="Liberation Sans" font-size="10" fill="#c8c8c8" text-anchor="middle">?</text></svg><svg class="r" style="left:1265px;top:132px;" width="33" height="27" viewBox="0 0 33 27"><path d="M1 1h26v12M1 7h20M1 13h16M1 19h20M1 1v18" fill="none" stroke="#b7cfe4" stroke-width="2"/><path d="M22 11l9 9-4 1 3 5-2 1-3-5-3 3z" fill="#c4c4c4"/></svg><svg class="r" style="left:1305px;top:130px;" width="30" height="26" viewBox="0 0 30 26"><circle cx="6.5" cy="19" r="5.5" fill="none" stroke="#555" stroke-width="2.5"/><circle cx="23.5" cy="19" r="5.5" fill="none" stroke="#555" stroke-width="2.5"/><path d="M2 17L6 3h6v14zM28 17L24 3h-6v14z" fill="#555"/><rect x="12" y="8" width="6" height="6" fill="#555"/></svg><div class="r" style="left:1344px;top:128px;width:1px;height:35px;background:#d0d0d0;"></div><svg class="r" style="left:1355px;top:130px;" width="30" height="28" viewBox="0 0 30 28"><rect x="7" y="1" width="16" height="9" fill="none" stroke="#555" stroke-width="2.6"/><rect x="1" y="9" width="28" height="12" rx="3" fill="#555"/><rect x="7" y="16" width="16" height="11" fill="#f7f7f7" stroke="#555" stroke-width="2.6"/></svg><svg class="r" style="left:1392px;top:130px;" width="33" height="31" viewBox="0 0 33 31"><rect x="7" y="1" width="16" height="9" fill="none" stroke="#555" stroke-width="2.6"/><rect x="1" y="9" width="28" height="12" rx="3" fill="#555"/><rect x="7" y="16" width="16" height="11" fill="#f7f7f7" stroke="#555" stroke-width="2.6"/><path d="M28 14L18.5 23.5H24L20 29.5L32.5 19.5H26.5L30.5 14Z" fill="#dca46c"/></svg><svg class="r" style="left:1462px;top:153px;" width="7" height="7" viewBox="0 0 7 7"><path d="M7 0v7H0z" fill="#333"/></svg><div class="r" style="left:1155px;top:171px;width:288px;height:608px;background:#ffffff;border:1px solid #2a7cd0;box-sizing:border-box;"></div><div class="r" style="left:1170px;top:172px;width:1px;height:606px;background-image:linear-gradient(180deg,#c9c9c9 60%,transparent 60%);background-size:1px 9px;"></div><div class="r" style="left:1428px;top:172px;width:1px;height:606px;background-image:linear-gradient(180deg,#c9c9c9 60%,transparent 60%);background-size:1px 9px;"></div><div class="t" style="top:173.73px;font-size:14.5px;color:#111;left:1169px;">06/04/2021</div><div class="t" style="top:173.73px;font-size:14.5px;color:#111;right:492px;">so-0044771</div><div class="t" style="top:200.73px;font-size:14.5px;color:#111;letter-spacing:-0.20px;left:1298px;transform:translateX(-50%);">SQUID</div><div class="t" style="top:221.73px;font-size:14.5px;color:#111;letter-spacing:-0.25px;left:1298px;transform:translateX(-50%);">15 Pearlman DR</div><div class="t" style="top:240.73px;font-size:14.5px;color:#111;letter-spacing:-0.25px;left:1298px;transform:translateX(-50%);">Spring Valley, NY, 10977</div><div class="t" style="top:262.73px;font-size:14.5px;color:#111;font-weight:700;letter-spacing:-0.10px;left:1169px;">Bill To:</div><div class="t" style="top:262.73px;font-size:14.5px;color:#111;letter-spacing:-0.25px;right:492px;">Karinatest</div><div class="t" style="top:284.73px;font-size:14.5px;color:#111;font-weight:700;letter-spacing:-0.10px;left:1169px;">Phone:</div><div class="t" style="top:284.73px;font-size:14.5px;color:#111;letter-spacing:-0.25px;right:492px;">430574389656</div><div class="r" style="left:1169px;top:311px;width:260px;height:1px;background-image:linear-gradient(90deg,#111 58%,transparent 58%);background-size:6px 1px;"></div><div class="r" style="left:1169px;top:313px;width:260px;height:1px;background-image:linear-gradient(90deg,#111 58%,transparent 58%);background-size:6px 1px;"></div><div class="t" style="top:321.73px;font-size:14.5px;color:#111;font-weight:700;letter-spacing:-0.10px;left:1169px;">Item Name</div><div class="t" style="top:321.73px;font-size:14.5px;color:#111;font-weight:700;letter-spacing:-0.10px;left:1266px;">Qty</div><div class="t" style="top:321.73px;font-size:14.5px;color:#111;font-weight:700;letter-spacing:-0.10px;right:562px;">Price</div><div class="t" style="top:321.73px;font-size:14.5px;color:#111;font-weight:700;letter-spacing:-0.10px;right:492px;">Ext Price</div><div class="r" style="left:1169px;top:345px;width:260px;height:3px;background-image:linear-gradient(90deg,#111 58%,transparent 58%);background-size:6px 3px;"></div><div class="t" style="top:353.73px;font-size:14.5px;color:#111;letter-spacing:-0.25px;left:1169px;">0080005001</div><div class="t" style="top:353.73px;font-size:14.5px;color:#111;letter-spacing:-0.43px;left:1288px;transform:translateX(-50%);">1</div><div class="t" style="top:353.73px;font-size:14.5px;color:#111;letter-spacing:-0.25px;right:562px;">$10.00</div><div class="t" style="top:353.73px;font-size:14.5px;color:#111;letter-spacing:-0.25px;right:492px;">$6.80</div><div class="t" style="top:372.73px;font-size:14.5px;color:#111;letter-spacing:-0.25px;left:1169px;">91712</div><div class="t" style="top:393.73px;font-size:14.5px;color:#111;letter-spacing:-0.25px;left:1176px;">234325454</div><div class="t" style="top:415.73px;font-size:14.5px;color:#111;left:1176px;">Discount: -32.00% Original Price:</div><div class="t" style="top:434.73px;font-size:14.5px;color:#111;letter-spacing:-0.25px;left:1176px;">$10.00</div><div class="r" style="left:1169px;top:457px;width:260px;height:1px;background-image:linear-gradient(90deg,#111 58%,transparent 58%);background-size:6px 1px;"></div><div class="r" style="left:1169px;top:459px;width:260px;height:1px;background-image:linear-gradient(90deg,#111 58%,transparent 58%);background-size:6px 1px;"></div><div class="t" style="top:465.73px;font-size:14.5px;color:#111;letter-spacing:-0.20px;right:573px;">Subtotal:</div><div class="t" style="top:465.73px;font-size:14.5px;color:#111;letter-spacing:-0.20px;right:492px;">$6.80</div><div class="t" style="top:488.73px;font-size:14.5px;color:#111;letter-spacing:-0.20px;right:573px;">Sales Tax(5.00%):</div><div class="t" style="top:488.73px;font-size:14.5px;color:#111;letter-spacing:-0.20px;right:492px;">$0.00</div><div class="t" style="top:510.73px;font-size:14.5px;color:#111;font-weight:700;letter-spacing:-0.10px;right:573px;">RECEIPT TOTAL:</div><div class="t" style="top:510.73px;font-size:14.5px;color:#111;font-weight:700;letter-spacing:-0.10px;right:492px;">$6.80</div><div class="r" style="left:1169px;top:532px;width:260px;height:1px;background-image:linear-gradient(90deg,#111 58%,transparent 58%);background-size:6px 1px;"></div><div class="r" style="left:1169px;top:534px;width:260px;height:1px;background-image:linear-gradient(90deg,#111 58%,transparent 58%);background-size:6px 1px;"></div><div class="t" style="top:558.73px;font-size:14.5px;color:#111;font-weight:700;letter-spacing:-0.10px;left:1169px;">Payment</div><div class="t" style="top:580.73px;font-size:14.5px;color:#111;letter-spacing:-0.35px;left:1169px;">Check 43644363:</div><div class="t" style="top:580.73px;font-size:14.5px;color:#111;letter-spacing:-0.25px;right:492px;">$15.00</div><div class="t" style="top:601.73px;font-size:14.5px;color:#111;font-weight:700;letter-spacing:-0.10px;left:1169px;">Change Given:</div><div class="t" style="top:601.73px;font-size:14.5px;color:#111;font-weight:700;letter-spacing:-0.10px;right:492px;">$-8.20</div><div class="t" style="top:622.73px;font-size:14.5px;color:#111;font-weight:700;letter-spacing:-0.10px;left:1169px;">Total Payments:</div><div class="t" style="top:622.73px;font-size:14.5px;color:#111;font-weight:700;letter-spacing:-0.10px;right:492px;">$15.00</div><div class="t" style="top:663.73px;font-size:14.5px;color:#111;letter-spacing:-0.35px;left:1169px;">Prev Account Balance:</div><div class="t" style="top:663.73px;font-size:14.5px;color:#111;letter-spacing:-0.25px;right:492px;">$116,143.05</div><div class="t" style="top:685.73px;font-size:14.5px;color:#111;letter-spacing:-0.35px;left:1169px;">New Account Balance:</div><div class="t" style="top:685.73px;font-size:14.5px;color:#111;letter-spacing:-0.25px;right:492px;">$116,134.85</div><svg class="r" style="left:1174px;top:723px;" width="251" height="36" viewBox="0 0 251 36"><rect x="-0.25" y="0" width="5.50" height="36" fill="#000"/><rect x="6.50" y="0" width="2.50" height="36" fill="#000"/><rect x="18.00" y="0" width="2.00" height="36" fill="#000"/><rect x="24.75" y="0" width="2.50" height="36" fill="#000"/><rect x="31.00" y="0" width="7.00" height="36" fill="#000"/><rect x="39.75" y="0" width="5.50" height="36" fill="#000"/><rect x="49.00" y="0" width="5.00" height="36" fill="#000"/><rect x="58.00" y="0" width="2.00" height="36" fill="#000"/><rect x="63.00" y="0" width="5.50" height="36" fill="#000"/><rect x="74.00" y="0" width="4.00" height="36" fill="#000"/><rect x="83.00" y="0" width="2.00" height="36" fill="#000"/><rect x="86.75" y="0" width="6.75" height="36" fill="#000"/><rect x="98.50" y="0" width="7.00" height="36" fill="#000"/><rect x="106.75" y="0" width="1.75" height="36" fill="#000"/><rect x="114.25" y="0" width="3.50" height="36" fill="#000"/><rect x="123.50" y="0" width="3.00" height="36" fill="#000"/><rect x="135.50" y="0" width="7.50" height="36" fill="#000"/><rect x="147.25" y="0" width="1.75" height="36" fill="#000"/><rect x="154.25" y="0" width="6.75" height="36" fill="#000"/><rect x="163.00" y="0" width="3.50" height="36" fill="#000"/><rect x="172.25" y="0" width="5.75" height="36" fill="#000"/><rect x="183.50" y="0" width="2.00" height="36" fill="#000"/><rect x="187.25" y="0" width="5.00" height="36" fill="#000"/><rect x="196.00" y="0" width="7.50" height="36" fill="#000"/><rect x="205.50" y="0" width="4.25" height="36" fill="#000"/><rect x="216.00" y="0" width="2.50" height="36" fill="#000"/><rect x="221.50" y="0" width="3.25" height="36" fill="#000"/><rect x="232.25" y="0" width="6.75" height="36" fill="#000"/><rect x="241.00" y="0" width="2.00" height="36" fill="#000"/><rect x="244.75" y="0" width="5.50" height="36" fill="#000"/></svg><div class="t" style="top:764.15px;font-size:14px;color:#333;letter-spacing:0.30px;left:1298px;transform:translateX(-50%);">0338309</div><div class="r" style="left:1125px;top:823px;width:348px;height:25px;background:#efefef;border-top:1px solid #c6c6c6;box-sizing:border-box;"></div><div class="t" style="top:830.84px;font-size:12px;color:#333;letter-spacing:-0.30px;left:1130px;">Page:</div><div class="r" style="left:1161px;top:828px;width:29px;height:17px;background:#f9f9f9;border:1px solid #bdbdbd;box-sizing:border-box;"></div><div class="t" style="top:830.84px;font-size:12px;color:#333;letter-spacing:-0.36px;left:1176px;transform:translateX(-50%);">1</div><div class="t" style="top:830.84px;font-size:12px;color:#333;letter-spacing:-0.20px;left:1194px;">/ 1</div><div class="t" style="top:830.84px;font-size:12px;color:#333;letter-spacing:-0.20px;left:1286px;">100%</div><div class="r" style="left:1322px;top:834px;width:7px;height:2px;background:#333;"></div><div class="r" style="left:1334px;top:834px;width:116px;height:1.5px;background:#a0a0a0;"></div><div class="r" style="left:1390px;top:828px;width:6px;height:13px;background:#555;border:1px solid #fff;box-sizing:border-box;"></div><div class="r" style="left:1338px;top:843px;width:1px;height:3px;background:#777;"></div><div class="r" style="left:1447px;top:843px;width:1px;height:3px;background:#777;"></div><svg class="r" style="left:1455px;top:829px;" width="10" height="10" viewBox="0 0 10 10"><path d="M5 0v10M0 5h10" stroke="#222" stroke-width="2"/></svg></body></html>
